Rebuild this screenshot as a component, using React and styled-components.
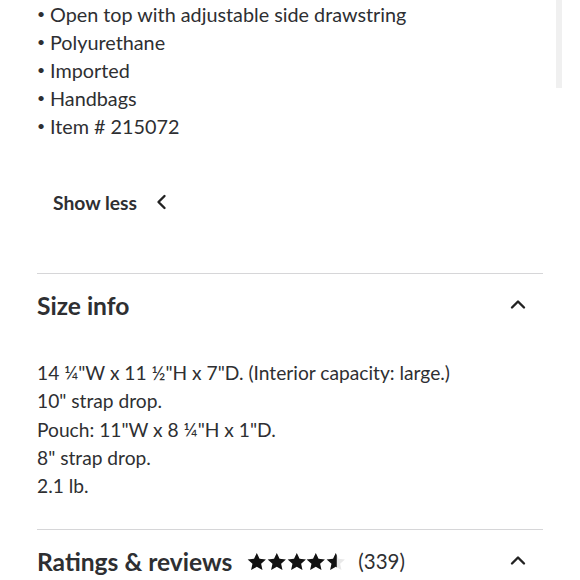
import React from 'react'
import styled, { createGlobalStyle } from 'styled-components'

const GlobalStyle = createGlobalStyle`
  html, body {
    margin: 0;
    padding: 0;
    background: #fff;
    overflow: hidden;
  }
  body {
    font-family: Lato, "Open Sans", sans-serif;
    color: #2e2f32;
  }
`

const Page = styled.div`
  width: 580px;
  height: 580px;
  position: relative;
  overflow: hidden;
`

const Scrollbar = styled.div`
  position: absolute;
  top: 0;
  right: 18px;
  width: 6px;
  height: 88px;
  background: #f0f0f0;
`

const Content = styled.div`
  padding: 0 37px 0 37px;
`

const BulletList = styled.ul`
  list-style: none;
  margin: 0;
  padding: 0;
`

const Bullet = styled.li`
  font-size: 19.8px;
  line-height: 28px;
  display: flex;
  align-items: center;
  &::before {
    content: '•';
    display: inline-block;
    width: 13px;
    font-size: 14px;
  }
`

const ShowLess = styled.div`
  display: flex;
  align-items: center;
  gap: 16px;
  font-size: 19.3px;
  font-weight: 700;
  margin: 50px 0 0 16px;
  height: 24px;
`

const Section = styled.section`
  border-top: 1px solid #d6d6d8;
  margin-top: ${p => p.$top}px;
`

const SectionHead = styled.div`
  display: flex;
  align-items: center;
  justify-content: space-between;
  height: 62px;
  padding-right: 16px;
`

const Title = styled.h2`
  margin: 0;
  font-size: 24.6px;
  font-weight: 700;
  display: flex;
  align-items: center;
`

const SizeBody = styled.div`
  padding-top: 23px;
  font-size: 19.2px;
  line-height: 28.3px;
`

const Stars = styled.span`
  display: inline-flex;
  margin-left: 15px;
  gap: 0;
`

const Count = styled.span`
  font-size: 20.5px;
  font-weight: 400;
  margin-left: 13px;
`

const Chevron = ({ dir }) => {
  const d = dir === 'up' ? 'M3 11.5 L9 5.5 L15 11.5' : 'M11.5 3 L5.5 9 L11.5 15'
  return (
    <svg width="18" height="18" viewBox="0 0 18 18">
      <path d={d} fill="none" stroke="#222" strokeWidth="2.4" strokeLinecap="round" strokeLinejoin="round" />
    </svg>
  )
}

const starPath = 'M10 0.8l2.8 6 6.5.6-4.9 4.4 1.4 6.4L10 14.9l-5.8 3.3 1.4-6.4L.7 7.4l6.5-.6z'

const Star = ({ part = 1, id }) => (
  <svg width="19.6" height="19" viewBox="0 0 20 19">
    <defs>
      <clipPath id={id}>
        <rect x="0" y="0" width={20 * part} height="20" />
      </clipPath>
    </defs>
    <path d={starPath} fill="#e8e8e8" />
    <path d={starPath} fill="#111" clipPath={`url(#${id})`} />
  </svg>
)

const bullets = [
  'Open top with adjustable side drawstring',
  'Polyurethane',
  'Imported',
  'Handbags',
  'Item # 215072',
]

const sizes = [
  '14 ¼"W x 11 ½"H x 7"D. (Interior capacity: large.)',
  '10" strap drop.',
  'Pouch: 11"W x 8 ¼"H x 1"D.',
  '8" strap drop.',
  '2.1 lb.',
]

export default function App() {
  return (
    <Page>
      <GlobalStyle />
      <Scrollbar />
      <Content>
        <BulletList>
          {bullets.map(b => <Bullet key={b}>{b}</Bullet>)}
        </BulletList>
        <ShowLess>Show less <Chevron dir="left" /></ShowLess>
        <Section $top={59}>
          <SectionHead>
            <Title>Size info</Title>
            <Chevron dir="up" />
          </SectionHead>
          <SizeBody>
            {sizes.map(s => <div key={s}>{s}</div>)}
          </SizeBody>
        </Section>
        <Section $top={29}>
          <SectionHead>
            <Title>
              Ratings &amp; reviews
              <Stars>
                <Star id="s1" />
                <Star id="s2" />
                <Star id="s3" />
                <Star id="s4" />
                <Star id="s5" part={0.55} />
              </Stars>
              <Count>(339)</Count>
            </Title>
            <Chevron dir="up" />
          </SectionHead>
        </Section>
      </Content>
    </Page>
  )
}
